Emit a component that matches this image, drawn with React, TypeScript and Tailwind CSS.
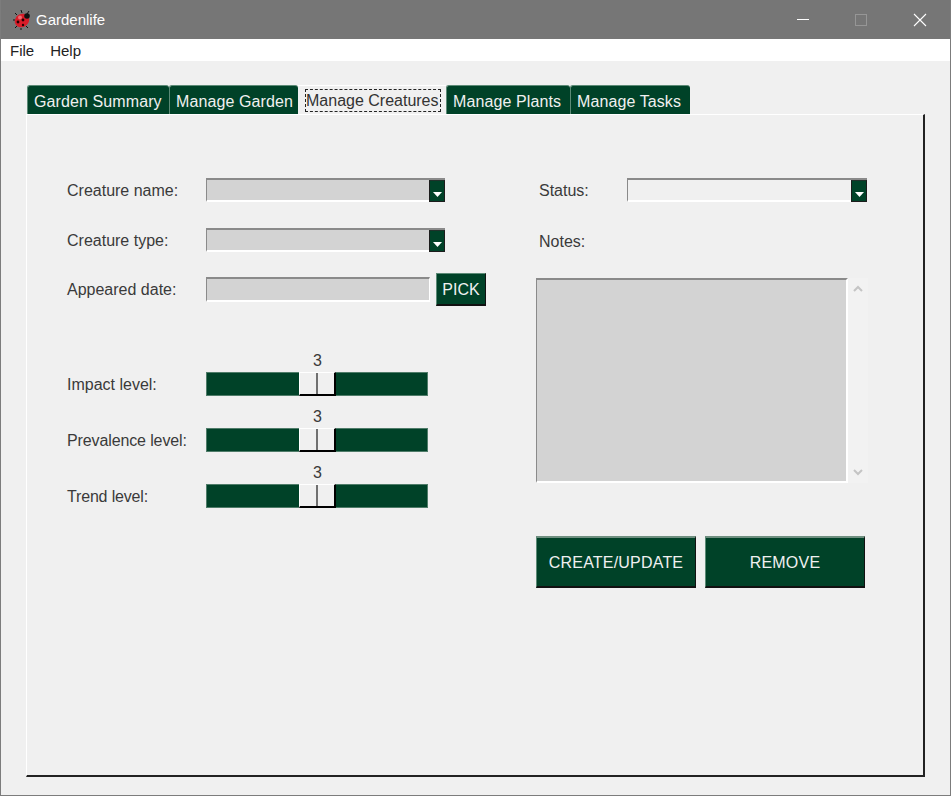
import React from 'react'

const green = 'bg-[#004228]'

const Ladybug = () => (
  <svg width="20" height="20" viewBox="0 0 20 20" className="shrink-0">
    <path d="M5 5 3 3M10 3 9 0M15 4 17 1M3 10H1M5 16 3 18M9 18v2M14 16 16 18" stroke="#111" strokeWidth="1" />
    <ellipse cx="10" cy="10.5" rx="7.5" ry="6.5" fill="#d81c28" transform="rotate(-30 10 10.5)" />
    <circle cx="15" cy="6" r="2.8" fill="#111" />
    <circle cx="8" cy="7.5" r="2" fill="#ee6a70" />
    <circle cx="11" cy="10" r="1.4" fill="#200" />
    <circle cx="6" cy="12" r="1.4" fill="#200" />
    <circle cx="11" cy="15" r="1.2" fill="#200" />
  </svg>
)

const Tab = ({ label, width }: { label: string; width: string }) => (
  <div className={`${width} h-[29px] ${green} text-[#f0f0f0] tracking-[0.1px] rounded-t-[3px] border-t border-l border-[#5c8a76] flex items-center pl-[6px] pt-[3px] whitespace-nowrap`}>
    {label}
  </div>
)

const Arrow = () => (
  <div className={`w-[16px] h-[22px] ${green} border border-[#1c1c1c] border-t-[#20302a] flex items-end justify-center pb-[4px]`}>
    <svg width="9" height="5" viewBox="0 0 9 5"><path d="M0 0h9L4.5 5z" fill="#fff" /></svg>
  </div>
)

const Combo = ({ fill, width }: { fill: string; width: string }) => (
  <div className={`${width} h-[24px] ${fill} border-t-2 border-l border-[#8a8a8a] border-b-2 border-b-white flex justify-end`}>
    <Arrow />
  </div>
)

const Row = ({ label, gap, children }: { label: string; gap: string; children: React.ReactNode }) => (
  <div className={`flex items-center ${gap}`}>
    <div className="w-[139px] text-[#3a3a3a] pt-[2px]">{label}</div>
    {children}
  </div>
)

const Scale = ({ label, tight = '' }: { label: string; tight?: string }) => (
  <div className="flex items-end h-[56px]">
    <div className={`w-[139px] text-[#3a3a3a] h-[24px] leading-[24px] pt-[1px] ${tight}`}>{label}</div>
    <div className="w-[222px] flex flex-col">
      <div className="text-center text-[#3a3a3a] leading-[24px] h-[24px] pl-[1px] pt-[1px]">3</div>
      <div className={`h-[24px] ${green} border border-[#4f7c69] flex justify-center pl-[1px]`}>
        <div className="w-[37px] -my-px h-[24px] bg-[#f0f0f0] border-t border-l border-white border-r-2 border-b-2 border-r-black border-b-black flex justify-center">
          <div className="w-[2px] bg-[#707070]" />
        </div>
      </div>
    </div>
  </div>
)

const BigButton = ({ label }: { label: string }) => (
  <button className={`w-[160px] h-[52px] pt-[1px] ${green} text-[#f0f0f0] tracking-[0.2px] border-t-2 border-t-[#6f8f80] border-l border-l-[#5c8a76] border-r border-r-[#111] border-b-2 border-b-[#111]`}>
    {label}
  </button>
)

export default function App() {
  return (
    <div className="w-[951px] h-[796px] bg-[#f0f0f0] border-x border-b border-[#7c7c7c] flex flex-col overflow-hidden font-['Liberation_Sans',Arial,sans-serif] text-[16px]">
      <div className="h-[39px] shrink-0 bg-[#767676] flex items-center text-white">
        <div className="ml-[11px] w-[24px]"><Ladybug /></div>
        <span className="text-[15px] pt-[1px]">Gardenlife</span>
        <div className="ml-auto flex items-center">
          <div className="w-[12px] h-px bg-white mr-[46px]" />
          <div className="w-[12px] h-[12px] border border-[#969696] mr-[46px]" />
          <svg width="14" height="14" viewBox="0 0 14 14" className="mr-[23px]"><path d="M1 1l12 12M13 1 1 13" stroke="#fff" strokeWidth="1.1" /></svg>
        </div>
      </div>

      <div className="h-[22px] shrink-0 bg-white flex items-center pl-[9px] pt-[2px] gap-[16px] text-[15px] text-[#222]">
        <span>File</span>
        <span>Help</span>
      </div>

      <div className="ml-[25px] mt-[24px] w-[899px] flex items-end">
        <div className="w-px" />
        <Tab label="Garden Summary" width="w-[142px]" />
        <Tab label="Manage Garden" width="w-[129px]" />
        <div className="w-[148px] h-[29px] flex items-center pl-[7px] bg-[#f0f0f0] border-t border-white">
          <div className="border border-dashed border-[#222] h-[23px] w-[136px] flex items-center pt-[1px] text-[#333] whitespace-nowrap overflow-hidden">Manage Creatures</div>
        </div>
        <Tab label="Manage Plants" width="w-[124px]" />
        <Tab label="Manage Tasks" width="w-[120px]" />
      </div>

      <div className="ml-[25px] w-[899px] h-[663px] border-t border-l border-t-white border-l-white border-r-2 border-b-2 border-r-[#222] border-b-[#222] flex text-[#3a3a3a]">
        <div className="ml-[40px] mt-[63px] w-[470px] flex flex-col">
          <Row label="Creature name:" gap="h-[24px]"><Combo fill="bg-[#d3d3d3]" width="w-[239px]" /></Row>
          <Row label="Creature type:" gap="mt-[26px] h-[24px]"><Combo fill="bg-[#d3d3d3]" width="w-[239px]" /></Row>
          <div className="flex items-center mt-[21px] h-[32px]">
            <div className="w-[139px] pt-[2px]">Appeared date:</div>
            <div className="w-[224px] h-[25px] bg-[#d3d3d3] border-t-2 border-l border-[#8a8a8a] border-b-2 border-b-white border-r border-r-white" />
            <button className={`ml-[6px] w-[50px] h-[33px] pt-[2px] ${green} text-[#f0f0f0] border-t border-l border-[#5c8a76] border-r border-b-2 border-r-[#111] border-b-[#111]`}>PICK</button>
          </div>
          <div className="mt-[35px] flex flex-col">
            <Scale label="Impact level:" />
            <Scale label="Prevalence level:" tight="tracking-[-0.12px]" />
            <Scale label="Trend level:" tight="tracking-[-0.17px]" />
          </div>
        </div>

        <div className="-ml-[1px] mt-[63px] flex flex-col w-[340px]">
          <div className="flex items-center h-[24px]">
            <div className="w-[91px] pl-[3px] pt-[2px]">Status:</div>
            <Combo fill="bg-[#f0f0f0]" width="w-[240px]" />
          </div>
          <div className="mt-[28px] pl-[3px] pt-[1px] leading-[22px]">Notes:</div>
          <div className="mt-[25px] flex h-[205px]">
            <div className="w-[312px] bg-[#d3d3d3] border-t-2 border-l border-[#8a8a8a] border-b-2 border-b-white border-r-2 border-r-white" />
            <div className="w-[20px] bg-[#f2f2f2] flex flex-col items-center justify-between py-[7px]">
              <svg width="10" height="7" viewBox="0 0 10 7"><path d="M1 6l4-4 4 4" fill="none" stroke="#c4c4c4" strokeWidth="2" /></svg>
              <svg width="10" height="7" viewBox="0 0 10 7"><path d="M1 1l4 4 4-4" fill="none" stroke="#c4c4c4" strokeWidth="2" /></svg>
            </div>
          </div>
          <div className="mt-[53px] flex gap-[9px]">
            <BigButton label="CREATE/UPDATE" />
            <BigButton label="REMOVE" />
          </div>
        </div>
      </div>
    </div>
  )
}
